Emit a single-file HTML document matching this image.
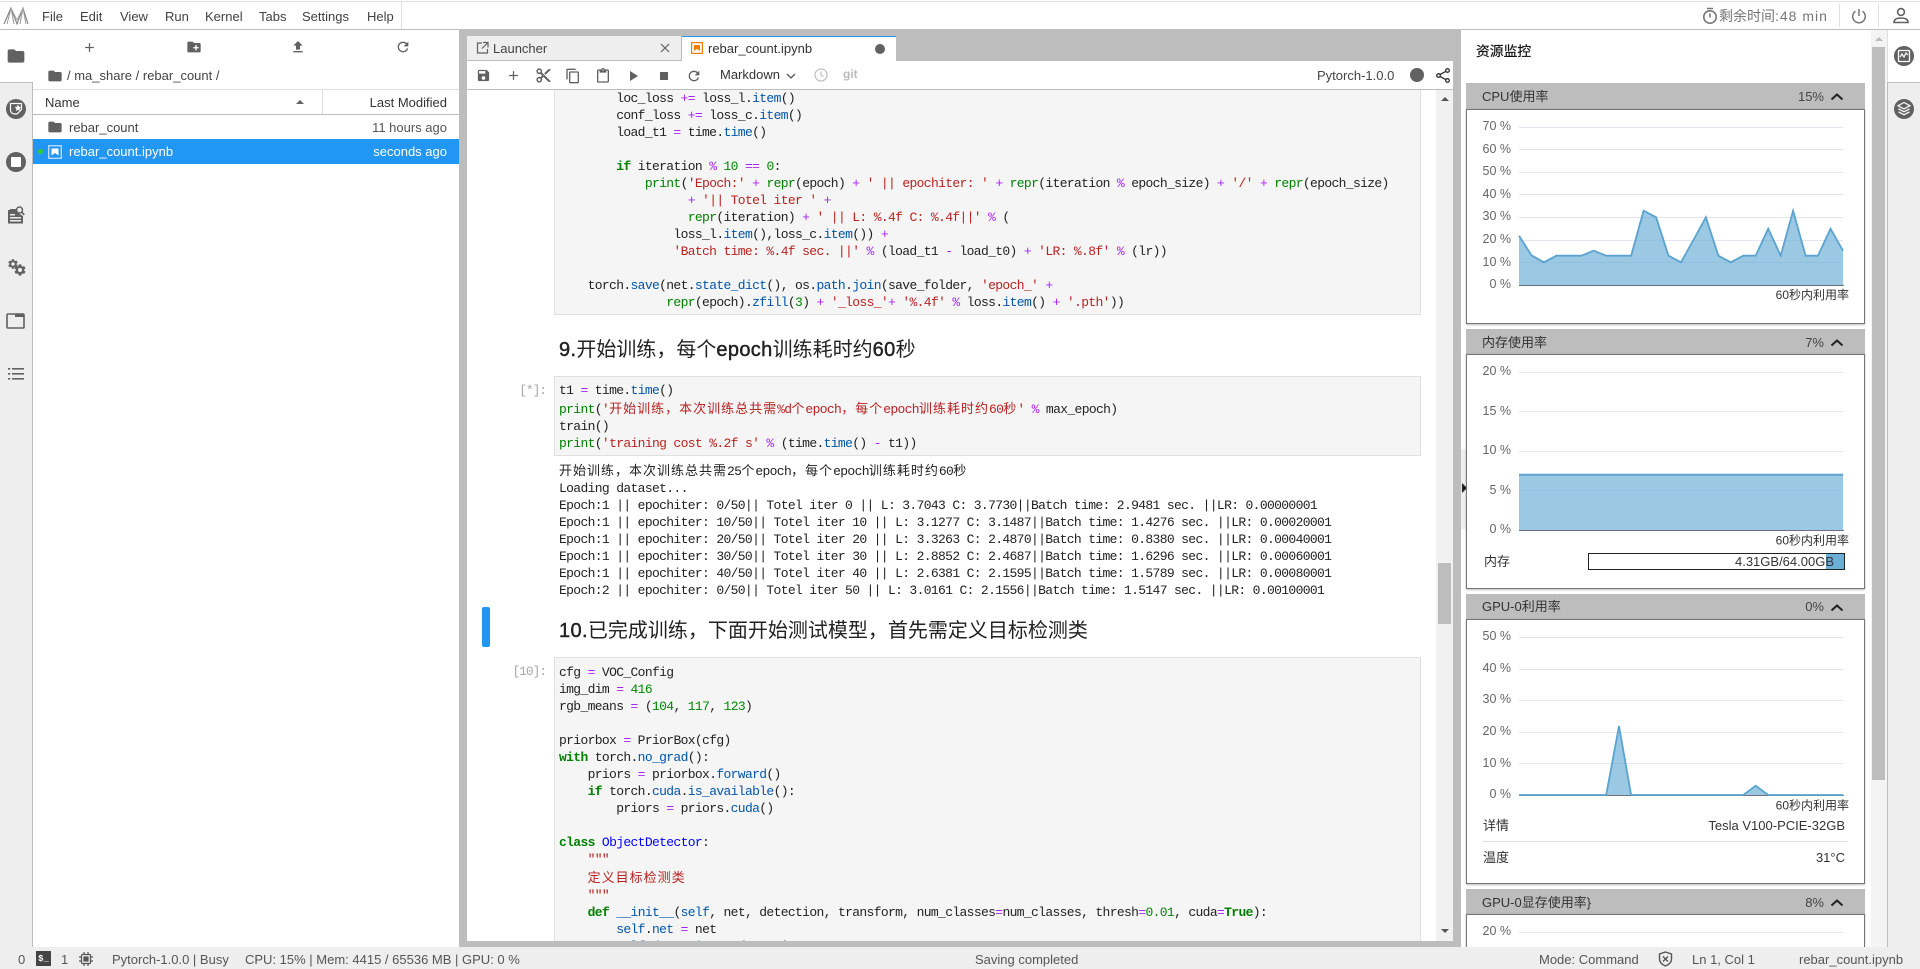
<!DOCTYPE html>
<html><head><meta charset="utf-8"><title>rebar_count.ipynb</title>
<style>
html,body{margin:0;padding:0;width:1920px;height:969px;overflow:hidden;background:#fff}
body{position:relative;font:13px/17px "Liberation Sans","Noto Sans CJK SC",sans-serif;color:#333}
.a{position:absolute;white-space:pre}
.ic{position:absolute;fill:#616161}
.m{top:8px;line-height:17px;color:#424242}
pre{margin:0;position:absolute;font:13px/17px "Liberation Mono","Noto Sans CJK SC",monospace;letter-spacing:-.65px;color:#222;left:559px}
pre i{font-style:normal;font-family:"Noto Sans CJK SC",sans-serif;letter-spacing:1px;font-size:13px;font-weight:400}
.k{color:#008000;font-weight:bold}.o{color:#a2f}.s{color:#ba2121}.p{color:#05a}.b{color:#008000}.n{color:#080}.d{color:#00f}
.box{position:absolute;left:554px;width:867px;background:#f5f5f5;border:1px solid #e0e0e0;box-sizing:border-box}
.pr{position:absolute;font:13px/17px "Liberation Mono",monospace;color:#a8a8a8;letter-spacing:-1.1px;text-align:right;width:70px;left:476px}
.h{position:absolute;left:559px;font-size:20px;line-height:28px;color:#222;white-space:pre;font-family:"Liberation Sans","Noto Sans CJK SC",sans-serif}
.h b{font-weight:normal;-webkit-text-stroke:.45px #222;letter-spacing:.35px}
.ph{position:absolute;left:1466px;width:399px;height:26px;background:#bdbdbd;box-sizing:border-box}
.pb{position:absolute;left:1466px;width:399px;background:#fff;border:1px solid #757575;box-sizing:border-box;box-shadow:0 1px 2px rgba(0,0,0,.25)}
.pt{position:absolute;left:1482px;line-height:17px;color:#333;white-space:pre}
.pv{position:absolute;right:96px;line-height:17px;color:#444}
.st{position:absolute;top:951px;line-height:17px;color:#555;white-space:pre}
</style></head><body>
<svg width="0" height="0" style="position:absolute"><defs>
<symbol id="folder" viewBox="0 0 24 24"><path d="M10 4H4c-1.1 0-2 .9-2 2v12c0 1.1.9 2 2 2h16c1.1 0 2-.9 2-2V8c0-1.1-.9-2-2-2h-8l-2-2z"/></symbol>
<symbol id="add" viewBox="0 0 24 24"><path d="M19 13h-6v6h-2v-6H5v-2h6V5h2v6h6v2z"/></symbol>
<symbol id="gear" viewBox="0 0 24 24"><path d="M19.14 12.94c.04-.3.06-.61.06-.94 0-.32-.02-.64-.07-.94l2.03-1.58c.18-.14.23-.41.12-.61l-1.92-3.32c-.12-.22-.37-.29-.59-.22l-2.39.96c-.5-.38-1.03-.7-1.62-.94l-.36-2.54c-.04-.24-.24-.41-.48-.41h-3.84c-.24 0-.43.17-.47.41l-.36 2.54c-.59.24-1.13.57-1.62.94l-2.39-.96c-.22-.08-.47 0-.59.22L2.74 8.87c-.12.21-.08.47.12.61l2.03 1.58c-.05.3-.09.63-.09.94s.02.64.07.94l-2.03 1.58c-.18.14-.23.41-.12.61l1.92 3.32c.12.22.37.29.59.22l2.39-.96c.5.38 1.03.7 1.62.94l.36 2.54c.05.24.24.41.48.41h3.84c.24 0 .44-.17.47-.41l.36-2.54c.59-.24 1.13-.56 1.62-.94l2.39.96c.22.08.47 0 .59-.22l1.92-3.32c.12-.22.07-.47-.12-.61l-2.01-1.58zM12 15.6c-1.98 0-3.6-1.62-3.6-3.6s1.62-3.6 3.6-3.6 3.6 1.62 3.6 3.6-1.62 3.6-3.6 3.6z"/></symbol>
<symbol id="refresh" viewBox="0 0 24 24"><path d="M17.65 6.35C16.2 4.9 14.21 4 12 4c-4.42 0-7.99 3.58-7.99 8s3.57 8 7.99 8c3.73 0 6.84-2.55 7.73-6h-2.08c-.82 2.33-3.04 4-5.65 4-3.31 0-6-2.69-6-6s2.69-6 6-6c1.66 0 3.14.69 4.22 1.78L13 11h7V4l-2.35 2.35z"/></symbol>
</defs></svg>

<!-- top bar -->
<div class="a" style="left:0;top:1px;width:1920px;height:1px;background:#e0e0e0"></div>
<div class="a" style="left:0;top:29px;width:1920px;height:1px;background:#bdbdbd"></div>
<svg class="a" style="left:3px;top:6px" width="26" height="20" fill="none" stroke="#777" stroke-width="1"><path d="M1 18 L8 2 L14 18 L20 2 L25 18"/><path d="M4 18 L8 2 L11 18 M17 18 L20 2 L23 18" stroke="#999"/><path d="M8 2 L14 14 L20 2" stroke="#aaa"/></svg>
<span class="a m" style="left:42px">File</span><span class="a m" style="left:80px">Edit</span><span class="a m" style="left:120px">View</span><span class="a m" style="left:165px">Run</span><span class="a m" style="left:205px">Kernel</span><span class="a m" style="left:259px">Tabs</span><span class="a m" style="left:302px">Settings</span><span class="a m" style="left:367px">Help</span>
<div class="a" style="left:401px;top:2px;width:1px;height:27px;background:#e0e0e0"></div>
<svg class="a" style="left:1702px;top:7px" width="16" height="18" fill="none" stroke="#757575" stroke-width="1.6"><circle cx="8" cy="10" r="6.2"/><path d="M5 1.5h6M8 6.5v4"/></svg>
<span class="a" style="left:1719px;top:7px;font-size:14px;line-height:18px;color:#777">剩余时间<span style="letter-spacing:1px">:48 min</span></span>
<div class="a" style="left:1839px;top:4px;width:1px;height:23px;background:#e0e0e0"></div>
<svg class="a" style="left:1851px;top:8px" width="16" height="16" fill="none" stroke="#757575" stroke-width="1.5"><path d="M8 1v7M4.5 3.2a6.3 6.3 0 1 0 7 0"/></svg>
<div class="a" style="left:1878px;top:4px;width:1px;height:23px;background:#e0e0e0"></div>
<svg class="a" style="left:1893px;top:7px" width="16" height="18" fill="none" stroke="#616161" stroke-width="1.6"><circle cx="8" cy="5" r="3.4"/><path d="M1 15.5c0-3.5 3-4.500 7-4.500s7 1 7 4.500z"/></svg>

<!-- left sidebar -->
<div class="a" style="left:0;top:82px;width:32px;height:865px;background:#eee;border-right:1px solid #bdbdbd;border-top:1px solid #bdbdbd"></div>
<svg class="ic" style="left:6px;top:46px" width="20" height="20"><use href="#folder"/></svg>
<svg class="a" style="left:0;top:90px" width="33" height="300" fill="#616161">
<circle cx="16" cy="19" r="10"/><path d="M10.500 13.500h11v6l-4.500 4.500h-2.500c-2.500 0-4-2-4-4z" fill="none" stroke="#fff" stroke-width="1.2"/><path d="M18 14.500l1 2.200 2.300.3-1.700 1.600.4 2.400-2-1.200-2 1.200.4-2.400-1.700-1.600 2.300-.3z" fill="#fff"/>
<circle cx="16" cy="72" r="10"/><rect x="11" y="67" width="10" height="10" rx="1" fill="#fff"/>
<g transform="translate(8,117)"><path d="M0 3h2v-1h7v3.500l6 3.500v7.500h-15z"/><rect x="2" y="7" width="5" height="1.500" fill="#eee"/><rect x="2" y="10" width="11" height="1.500" fill="#eee"/><rect x="2" y="13" width="11" height="1.500" fill="#eee"/><circle cx="11.500" cy="3" r="3" fill="#eee" stroke="#616161" stroke-width="1.500"/><path d="M13.500 5l2.800 2.800" stroke="#616161" stroke-width="1.600"/></g>
</svg>
<svg class="ic" style="left:7px;top:258px" width="12" height="12"><use href="#gear"/></svg>
<svg class="ic" style="left:13px;top:263px" width="14" height="14"><use href="#gear"/></svg>
<svg class="a" style="left:6px;top:313px" width="20" height="17"><rect x="1" y="1" width="17" height="14" fill="none" stroke="#616161" stroke-width="1.6" rx="1"/><rect x="9" y="1" width="9" height="3" fill="#616161"/></svg>
<svg class="a" style="left:7px;top:366px" width="18" height="16" fill="#616161"><rect x="1" y="2" width="2.200" height="1.600"/><rect x="5" y="2" width="12" height="1.600"/><rect x="1" y="7" width="2.200" height="1.600"/><rect x="5" y="7" width="12" height="1.600"/><rect x="1" y="12" width="2.200" height="1.600"/><rect x="5" y="12" width="12" height="1.600"/></svg>

<!-- file browser -->
<svg class="ic" style="left:82px;top:40px" width="15" height="15"><use href="#add"/></svg>
<svg class="a" style="left:186px;top:39px" width="16" height="16" viewBox="0 0 24 24" fill="#616161"><path d="M20 6h-8l-2-2H4c-1.11 0-1.99.89-1.99 2L2 18c0 1.11.89 2 2 2h16c1.11 0 2-.89 2-2V8c0-1.11-.89-2-2-2zm-1 8h-3v3h-2v-3h-3v-2h3V9h2v3h3v2z"/></svg>
<svg class="a" style="left:290px;top:39px" width="16" height="16" viewBox="0 0 24 24" fill="#616161"><path d="M9 16h6v-6h4l-7-7-7 7h4zm-4 2h14v2H5z"/></svg>
<svg class="ic" style="left:395px;top:39px" width="16" height="16"><use href="#refresh"/></svg>
<svg class="ic" style="left:47px;top:68px" width="16" height="16"><use href="#folder"/></svg>
<span class="a" style="left:67px;top:67px;color:#444">/ ma_share / rebar_count /</span>
<div class="a" style="left:33px;top:89px;width:426px;height:1px;background:#e0e0e0"></div>
<div class="a" style="left:33px;top:114px;width:426px;height:1px;background:#bdbdbd"></div>
<div class="a" style="left:322px;top:90px;width:1px;height:24px;background:#e0e0e0"></div>
<span class="a" style="left:45px;top:94px;color:#333">Name</span>
<div class="a" style="left:296px;top:100px;width:0;height:0;border:4.5px solid transparent;border-bottom:4.5px solid #616161;border-top:0"></div>
<span class="a" style="right:1473px;top:94px;color:#333">Last Modified</span>
<svg class="ic" style="left:47px;top:119px" width="16" height="16"><use href="#folder"/></svg>
<span class="a" style="left:69px;top:119px;color:#444">rebar_count</span>
<span class="a" style="right:1473px;top:119px;color:#555">11 hours ago</span>
<div class="a" style="left:33px;top:139px;width:426px;height:25px;background:#2196f3"></div>
<div class="a" style="left:38px;top:149px;width:5px;height:5px;border-radius:50%;background:#3c3"></div>
<svg class="a" style="left:48px;top:145px" width="14" height="14"><rect x=".7" y=".7" width="12.6" height="12.6" fill="none" stroke="#b5d9f8" stroke-width="1.4"/><path d="M3.5 3.5h7v7l-3.5-2.5-3.5 2.5z" fill="#fff"/></svg>
<span class="a" style="left:69px;top:143px;color:#fff">rebar_count.ipynb</span>
<span class="a" style="right:1473px;top:143px;color:#fff">seconds ago</span>

<!-- main gray frame -->
<div class="a" style="left:459px;top:30px;width:1002px;height:917px;background:#bdbdbd"></div>
<!-- tabs -->
<div class="a" style="left:467px;top:36px;width:214px;height:24px;background:#eee;border-right:1px solid #bdbdbd"></div>
<svg class="a" style="left:476px;top:41px" width="13" height="14" fill="none" stroke="#616161" stroke-width="1.2"><path d="M6 2H1.5v10h10V8M7 1.5h5v5M12 1.5L6 7.5"/></svg>
<span class="a" style="left:493px;top:40px;color:#444">Launcher</span>
<svg class="a" style="left:660px;top:43px" width="10" height="10" stroke="#616161" stroke-width="1.2"><path d="M1 1l8 8M9 1l-8 8"/></svg>
<div class="a" style="left:682px;top:36px;width:214px;height:25px;background:#fff;border-top:1px solid #2196f3;box-sizing:border-box"></div>
<svg class="a" style="left:691px;top:42px" width="12" height="12"><rect x=".6" y=".6" width="10.8" height="10.8" fill="none" stroke="#f57c00" stroke-width="1.2"/><path d="M3 3h6v6L6 7 3 9z" fill="#f57c00"/></svg>
<span class="a" style="left:708px;top:40px;color:#333">rebar_count.ipynb</span>
<div class="a" style="left:875px;top:44px;width:10px;height:10px;border-radius:50%;background:#616161"></div>

<!-- nb toolbar -->
<div class="a" style="left:467px;top:61px;width:986px;height:28px;background:#fff;border-bottom:1px solid #bdbdbd;box-sizing:content-box"></div>
<svg class="a" style="left:476px;top:68px" width="15" height="15" viewBox="0 0 24 24" fill="#616161"><path d="M17 3H5c-1.11 0-2 .9-2 2v14c0 1.1.89 2 2 2h14c1.1 0 2-.9 2-2V7l-4-4zm-5 16c-1.66 0-3-1.34-3-3s1.34-3 3-3 3 1.34 3 3-1.34 3-3 3zm3-10H5V5h10v4z"/></svg>
<svg class="ic" style="left:506px;top:68px" width="15" height="15"><use href="#add"/></svg>
<svg class="a" style="left:535px;top:67px" width="17" height="17" viewBox="0 0 24 24" fill="#616161"><path d="M9.64 7.64c.23-.5.36-1.05.36-1.64 0-2.21-1.79-4-4-4S2 3.79 2 6s1.79 4 4 4c.59 0 1.14-.13 1.64-.36L10 12l-2.36 2.36C7.14 14.13 6.59 14 6 14c-2.21 0-4 1.79-4 4s1.79 4 4 4 4-1.79 4-4c0-.59-.13-1.14-.36-1.64L12 14l7 7h3v-1L9.64 7.64zM6 8c-1.1 0-2-.89-2-2s.9-2 2-2 2 .89 2 2-.9 2-2 2zm0 12c-1.1 0-2-.89-2-2s.9-2 2-2 2 .89 2 2-.9 2-2 2zm6-7.5c-.28 0-.5-.22-.5-.5s.22-.5.5-.5.5.22.5.5-.22.5-.5.5zM19 3l-6 6 2 2 7-7V3z"/></svg>
<svg class="a" style="left:565px;top:68px" width="16" height="16" viewBox="0 0 24 24" fill="#616161"><path d="M16 1H4c-1.1 0-2 .9-2 2v14h2V3h12V1zm3 4H8c-1.1 0-2 .9-2 2v14c0 1.1.9 2 2 2h11c1.1 0 2-.9 2-2V7c0-1.1-.9-2-2-2zm0 16H8V7h11v14z"/></svg>
<svg class="a" style="left:595px;top:68px" width="16" height="16" viewBox="0 0 24 24" fill="#616161"><path d="M19 2h-4.18C14.4.84 13.3 0 12 0c-1.3 0-2.4.84-2.82 2H5c-1.1 0-2 .9-2 2v16c0 1.1.9 2 2 2h14c1.1 0 2-.9 2-2V4c0-1.1-.9-2-2-2zm-7 0c.55 0 1 .45 1 1s-.45 1-1 1-1-.45-1-1 .45-1 1-1zm7 18H5V4h2v3h10V4h2v16z"/></svg>
<svg class="a" style="left:630px;top:70px" width="9" height="12" fill="#616161"><path d="M0 1l8 5-8 5z"/></svg>
<div class="a" style="left:660px;top:72px;width:8px;height:8px;background:#616161"></div>
<svg class="ic" style="left:686px;top:68px" width="16" height="16"><use href="#refresh"/></svg>
<span class="a" style="left:720px;top:66px;color:#333">Markdown</span>
<svg class="a" style="left:786px;top:73px" width="10" height="7" fill="none" stroke="#555" stroke-width="1.3"><path d="M1 1l4 4 4-4"/></svg>
<svg class="a" style="left:814px;top:68px" width="14" height="14" fill="none" stroke="#bdbdbd" stroke-width="1.2"><circle cx="7" cy="7" r="6"/><path d="M7 3.5V7l2.5 1.5"/></svg>
<span class="a" style="left:843px;top:66px;color:#bbb;font-weight:bold;font-size:12px">git</span>
<span class="a" style="left:1317px;top:67px;color:#444">Pytorch-1.0.0</span>
<div class="a" style="left:1410px;top:68px;width:14px;height:14px;border-radius:50%;background:#616161"></div>
<svg class="a" style="left:1436px;top:68px" width="14" height="15" fill="none" stroke="#333" stroke-width="1.3"><circle cx="2.5" cy="7.5" r="1.8"/><circle cx="11.5" cy="2.5" r="1.8"/><circle cx="11.5" cy="12.5" r="1.8"/><path d="M4 6.5l6-3.2M4 8.5l6 3.2"/></svg>

<!-- notebook content -->
<div class="a" style="left:467px;top:90px;width:986px;height:851px;background:#fff;overflow:hidden">
<div style="position:absolute;left:-467px;top:-90px;width:1920px;height:969px">
<div class="box" style="top:60px;height:255px"></div>
<pre style="top:90px">        loc_loss <span class="o">+=</span> loss_l.<span class="p">item</span>()
        conf_loss <span class="o">+=</span> loss_c.<span class="p">item</span>()
        load_t1 <span class="o">=</span> time.<span class="p">time</span>()

        <span class="k">if</span> iteration <span class="o">%</span> <span class="n">10</span> <span class="o">==</span> <span class="n">0</span>:
            <span class="b">print</span>(<span class="s">'Epoch:'</span> <span class="o">+</span> <span class="b">repr</span>(epoch) <span class="o">+</span> <span class="s">' || epochiter: '</span> <span class="o">+</span> <span class="b">repr</span>(iteration <span class="o">%</span> epoch_size) <span class="o">+</span> <span class="s">'/'</span> <span class="o">+</span> <span class="b">repr</span>(epoch_size)
                  <span class="o">+</span> <span class="s">'|| Totel iter '</span> <span class="o">+</span>
                  <span class="b">repr</span>(iteration) <span class="o">+</span> <span class="s">' || L: %.4f C: %.4f||'</span> <span class="o">%</span> (
                loss_l.<span class="p">item</span>(),loss_c.<span class="p">item</span>()) <span class="o">+</span>
                <span class="s">'Batch time: %.4f sec. ||'</span> <span class="o">%</span> (load_t1 <span class="o">-</span> load_t0) <span class="o">+</span> <span class="s">'LR: %.8f'</span> <span class="o">%</span> (lr))

    torch.<span class="p">save</span>(net.<span class="p">state_dict</span>(), os.<span class="p">path</span>.<span class="p">join</span>(save_folder, <span class="s">'epoch_'</span> <span class="o">+</span>
               <span class="b">repr</span>(epoch).<span class="p">zfill</span>(<span class="n">3</span>) <span class="o">+</span> <span class="s">'_loss_'</span><span class="o">+</span> <span class="s">'%.4f'</span> <span class="o">%</span> loss.<span class="p">item</span>() <span class="o">+</span> <span class="s">'.pth'</span>))</pre>

<div class="h" style="top:336px"><b>9.</b>开始训练，每个<b>epoch</b>训练耗时约<b>60</b>秒</div>

<div class="pr" style="top:382px">[*]:</div>
<div class="box" style="top:376px;height:80px"></div>
<pre style="top:382px">t1 <span class="o">=</span> time.<span class="p">time</span>()
<span class="b">print</span>(<span class="s">'<i>开始训练，本次训练总共需</i>%d<i>个</i>epoch<i>，每个</i>epoch<i>训练耗时约</i>60<i>秒</i>'</span> <span class="o">%</span> max_epoch)
train()
<span class="b">print</span>(<span class="s">'training cost %.2f s'</span> <span class="o">%</span> (time.<span class="p">time</span>() <span class="o">-</span> t1))</pre>
<pre style="top:461px"><i>开始训练，本次训练总共需</i>25<i>个</i>epoch<i>，每个</i>epoch<i>训练耗时约</i>60<i>秒</i>
Loading dataset...
Epoch:1 || epochiter: 0/50|| Totel iter 0 || L: 3.7043 C: 3.7730||Batch time: 2.9481 sec. ||LR: 0.00000001
Epoch:1 || epochiter: 10/50|| Totel iter 10 || L: 3.1277 C: 3.1487||Batch time: 1.4276 sec. ||LR: 0.00020001
Epoch:1 || epochiter: 20/50|| Totel iter 20 || L: 3.3263 C: 2.4870||Batch time: 0.8380 sec. ||LR: 0.00040001
Epoch:1 || epochiter: 30/50|| Totel iter 30 || L: 2.8852 C: 2.4687||Batch time: 1.6296 sec. ||LR: 0.00060001
Epoch:1 || epochiter: 40/50|| Totel iter 40 || L: 2.6381 C: 2.1595||Batch time: 1.5789 sec. ||LR: 0.00080001
Epoch:2 || epochiter: 0/50|| Totel iter 50 || L: 3.0161 C: 2.1556||Batch time: 1.5147 sec. ||LR: 0.00100001</pre>

<div class="a" style="left:482px;top:607px;width:8px;height:40px;background:#2196f3;border-radius:2px"></div>
<div class="h" style="top:617px"><b>10.</b>已完成训练，下面开始测试模型，首先需定义目标检测类</div>

<div class="pr" style="top:663px">[10]:</div>
<div class="box" style="top:657px;height:320px"></div>
<pre style="top:664px">cfg <span class="o">=</span> VOC_Config
img_dim <span class="o">=</span> <span class="n">416</span>
rgb_means <span class="o">=</span> (<span class="n">104</span>, <span class="n">117</span>, <span class="n">123</span>)

priorbox <span class="o">=</span> PriorBox(cfg)
<span class="k">with</span> torch.<span class="p">no_grad</span>():
    priors <span class="o">=</span> priorbox.<span class="p">forward</span>()
    <span class="k">if</span> torch.<span class="p">cuda</span>.<span class="p">is_available</span>():
        priors <span class="o">=</span> priors.<span class="p">cuda</span>()

<span class="k">class</span> <span class="d">ObjectDetector</span>:
    <span class="s">"""</span>
    <span class="s"><i>定义目标检测类</i></span>
    <span class="s">"""</span>
    <span class="k">def</span> <span class="p">__init__</span>(<span class="p">self</span>, net, detection, transform, num_classes<span class="o">=</span>num_classes, thresh<span class="o">=</span><span class="n">0.01</span>, cuda<span class="o">=</span><span class="k">True</span>):
        <span class="p">self</span>.<span class="p">net</span> <span class="o">=</span> net
        <span class="p">self</span>.<span class="p">detection</span> <span class="o">=</span> detection</pre>
</div>
<!-- nb scrollbar -->
<div class="a" style="left:969px;top:0;width:17px;height:851px;background:#f1f1f1"></div>
<div class="a" style="left:971px;top:473px;width:13px;height:61px;background:#bdbdbd"></div>
<div class="a" style="left:974px;top:7px;width:0;height:0;border:4px solid transparent;border-bottom:4px solid #555;border-top:0"></div>
<div class="a" style="left:974px;top:839px;width:0;height:0;border:4px solid transparent;border-top:4px solid #555;border-bottom:0"></div>
</div>

<!-- right resource panel -->
<div class="a" style="left:1461px;top:30px;width:410px;height:917px;background:#fff"></div>
<div class="a" style="left:1461px;top:449px;width:5px;height:80px;background:#f0f0f0"></div>
<div class="a" style="left:1462px;top:483px;width:0;height:0;border:5.5px solid transparent;border-left:5px solid #222;border-right:0"></div>
<span class="a" style="left:1476px;top:42px;font-size:13.8px;line-height:20px;color:#111;font-weight:400;-webkit-text-stroke:.2px #111">资源监控</span>

<div class="ph" style="top:83px"></div>
<div class="pb" style="top:109px;height:215px"></div>
<span class="pt" style="top:88px">CPU使用率</span><span class="pv" style="top:88px">15%</span>
<div class="ph" style="top:329px"></div>
<div class="pb" style="top:354px;height:235px"></div>
<span class="pt" style="top:334px">内存使用率</span><span class="pv" style="top:334px">7%</span>
<div class="ph" style="top:594px"></div>
<div class="pb" style="top:619px;height:265px"></div>
<span class="pt" style="top:598px">GPU-0利用率</span><span class="pv" style="top:598px">0%</span>
<div class="ph" style="top:889px"></div>
<div class="pb" style="top:914px;height:60px"></div>
<span class="pt" style="top:894px">GPU-0显存使用率}</span><span class="pv" style="top:894px">8%</span>

<svg class="a" style="left:0;top:0" width="1920" height="969" font-family="'Liberation Sans','Noto Sans CJK SC',sans-serif" font-size="12.5">
<g fill="none" stroke="#222" stroke-width="2">
<path d="M1831.5 99.5l5.5-5 5.5 5M1831.5 345.5l5.5-5 5.5 5M1831.5 610.5l5.5-5 5.5 5M1831.5 905.5l5.5-5 5.5 5"/>
</g>
<!-- gridlines -->
<g stroke="#e3e6f0" stroke-width="1">
<path d="M1519 127.5H1843M1519 149.5H1843M1519 172.5H1843M1519 194.5H1843M1519 217.5H1843M1519 240.5H1843M1519 262.5H1843"/>
<path d="M1519 372.5H1843M1519 411.5H1843M1519 451.5H1843M1519 490.5H1843"/>
<path d="M1519 637.5H1843M1519 669.5H1843M1519 700.5H1843M1519 732.5H1843M1519 763.5H1843"/>
<path d="M1519 932.5H1843"/>
</g>
<!-- cpu chart -->
<polygon fill="#6baed6" fill-opacity=".68" points="1519,285 1519,235.7 1531.5,255.3 1543.9,262.3 1556.4,255.7 1568.8,255.7 1581.3,255.7 1593.8,250.7 1606.2,255.7 1618.7,255.7 1631.1,255.7 1643.6,210.7 1656.1,217.3 1668.5,255.7 1681,262.3 1693.4,240 1705.9,217.3 1718.4,255.7 1730.8,262.3 1743.3,255.7 1755.7,255.7 1768.2,228.7 1780.7,255.7 1793.1,210.7 1805.6,255.7 1818,255.7 1830.5,228.7 1843,250.7 1843,285"/>
<polyline fill="none" stroke="#5ba3cf" stroke-width="1.8" points="1519,235.7 1531.5,255.3 1543.9,262.3 1556.4,255.7 1568.8,255.7 1581.3,255.7 1593.8,250.7 1606.2,255.7 1618.7,255.7 1631.1,255.7 1643.6,210.7 1656.1,217.3 1668.5,255.7 1681,262.3 1693.4,240 1705.9,217.3 1718.4,255.7 1730.8,262.3 1743.3,255.7 1755.7,255.7 1768.2,228.7 1780.7,255.7 1793.1,210.7 1805.6,255.7 1818,255.7 1830.5,228.7 1843,250.7"/>
<path d="M1519 285.5H1844" stroke="#6e7079" stroke-width="1"/>
<!-- mem chart -->
<rect x="1519" y="474.7" width="324" height="55.6" fill="#6baed6" fill-opacity=".68"/>
<path d="M1519 474.7H1843" stroke="#5ba3cf" stroke-width="1.8"/>
<path d="M1519 530.5H1844" stroke="#6e7079" stroke-width="1"/>
<!-- gpu chart -->
<polygon fill="#6baed6" fill-opacity=".68" points="1606.2,795 1619,726 1631.1,795"/>
<polygon fill="#6baed6" fill-opacity=".68" points="1743.3,795 1755.7,785.7 1768.2,795"/>
<path d="M1519 795.5H1844" stroke="#6e7079" stroke-width="1"/>
<polyline fill="none" stroke="#5ba3cf" stroke-width="1.8" points="1519,795 1606.2,795 1619,726 1631.1,795 1743.3,795 1755.7,785.7 1768.2,795 1843,795"/>
<!-- labels -->
<g fill="#666" text-anchor="end">
<text x="1511" y="130">70 %</text><text x="1511" y="153">60 %</text><text x="1511" y="175">50 %</text><text x="1511" y="198">40 %</text><text x="1511" y="220">30 %</text><text x="1511" y="243">20 %</text><text x="1511" y="266">10 %</text><text x="1511" y="288">0 %</text>
<text x="1511" y="375">20 %</text><text x="1511" y="415">15 %</text><text x="1511" y="454">10 %</text><text x="1511" y="494">5 %</text><text x="1511" y="533">0 %</text>
<text x="1511" y="640">50 %</text><text x="1511" y="672">40 %</text><text x="1511" y="703">30 %</text><text x="1511" y="735">20 %</text><text x="1511" y="767">10 %</text><text x="1511" y="798">0 %</text>
<text x="1511" y="935">20 %</text>
</g>
<g fill="#333" text-anchor="end" font-size="12">
<text x="1849" y="299">60秒内利用率</text><text x="1849" y="544.5">60秒内利用率</text><text x="1849" y="809.5">60秒内利用率</text>
</g>
</svg>

<span class="a" style="left:1484px;top:553px;color:#333">内存</span>
<div class="a" style="left:1588px;top:553px;width:257px;height:17px;box-sizing:border-box;border:1px solid #222;background:#fff"></div>
<div class="a" style="left:1826px;top:554px;width:18px;height:15px;background:#6baed6"></div>
<span class="a" style="right:86px;top:553px;color:#333">4.31GB/64.00GB</span>
<span class="a" style="left:1483px;top:817px;color:#333">详情</span>
<span class="a" style="right:75px;top:817px;color:#333">Tesla V100-PCIE-32GB</span>
<div class="a" style="left:1483px;top:841px;width:365px;height:1px;background:#e0e0e0"></div>
<span class="a" style="left:1483px;top:849px;color:#333">温度</span>
<span class="a" style="right:75px;top:849px;color:#333">31°C</span>

<!-- right scrollbar -->
<div class="a" style="left:1871px;top:30px;width:16px;height:917px;background:#f4f4f4"></div>
<div class="a" style="left:1872px;top:47px;width:13px;height:733px;background:#bdbdbd"></div>
<div class="a" style="left:1875px;top:37px;width:0;height:0;border:4px solid transparent;border-bottom:4px solid #bbb;border-top:0"></div>

<!-- right sidebar -->
<div class="a" style="left:1887px;top:30px;width:33px;height:52px;background:#fff;border-left:1px solid #e0e0e0;box-sizing:border-box"></div>
<div class="a" style="left:1887px;top:82px;width:33px;height:865px;background:#eee;border-left:1px solid #bdbdbd;border-top:1px solid #bdbdbd;box-sizing:border-box"></div>
<svg class="a" style="left:1893px;top:45px" width="22" height="22"><circle cx="11" cy="11" r="10" fill="#616161"/><rect x="5.5" y="5.5" width="11" height="11" rx="1" fill="none" stroke="#fff" stroke-width="1.3"/><path d="M7 12l2-3 2 3 2-4 2 2" fill="none" stroke="#fff" stroke-width="1.2"/></svg>
<svg class="a" style="left:1893px;top:98px" width="22" height="22"><circle cx="11" cy="11" r="10" fill="#616161"/><path d="M11 4.5l6 3.2-6 3.2-6-3.2zM5.5 10.8l5.5 3 5.5-3M5.5 13.8l5.5 3 5.5-3" fill="none" stroke="#fff" stroke-width="1.2"/></svg>

<!-- status bar -->
<div class="a" style="left:0;top:947px;width:1920px;height:22px;background:#eee"></div>
<span class="st" style="left:18px">0</span>
<div class="a" style="left:36px;top:951px;width:15px;height:15px;background:#444;color:#fff;font:bold 9px/16px 'Liberation Mono',monospace;text-align:center">$_</div>
<span class="st" style="left:61px">1</span>
<svg class="a" style="left:79px;top:952px" width="14" height="14" fill="none" stroke="#555" stroke-width="1.2"><rect x="2.5" y="2.5" width="9" height="9" rx="1"/><rect x="5" y="5" width="4" height="4" fill="#555"/><path d="M5 0v2.5M9 0v2.5M5 11.5V14M9 11.5V14M0 5h2.5M0 9h2.5M11.5 5H14M11.5 9H14"/></svg>
<span class="st" style="left:112px">Pytorch-1.0.0 | Busy</span>
<span class="st" style="left:245px">CPU: 15% | Mem: 4415 / 65536 MB | GPU: 0 %</span>
<span class="st" style="left:975px">Saving completed</span>
<span class="st" style="left:1539px">Mode: Command</span>
<svg class="a" style="left:1658px;top:951px" width="15" height="16" fill="none" stroke="#555" stroke-width="1.4"><path d="M7.5 1l6 2v5c0 3.5-3 5.8-6 7-3-1.200-6-3.500-6-7V3z"/><path d="M5 5.500l5 5M10 5.500l-5 5"/></svg>
<span class="st" style="left:1692px">Ln 1, Col 1</span>
<span class="st" style="left:1799px">rebar_count.ipynb</span>
</body></html>
